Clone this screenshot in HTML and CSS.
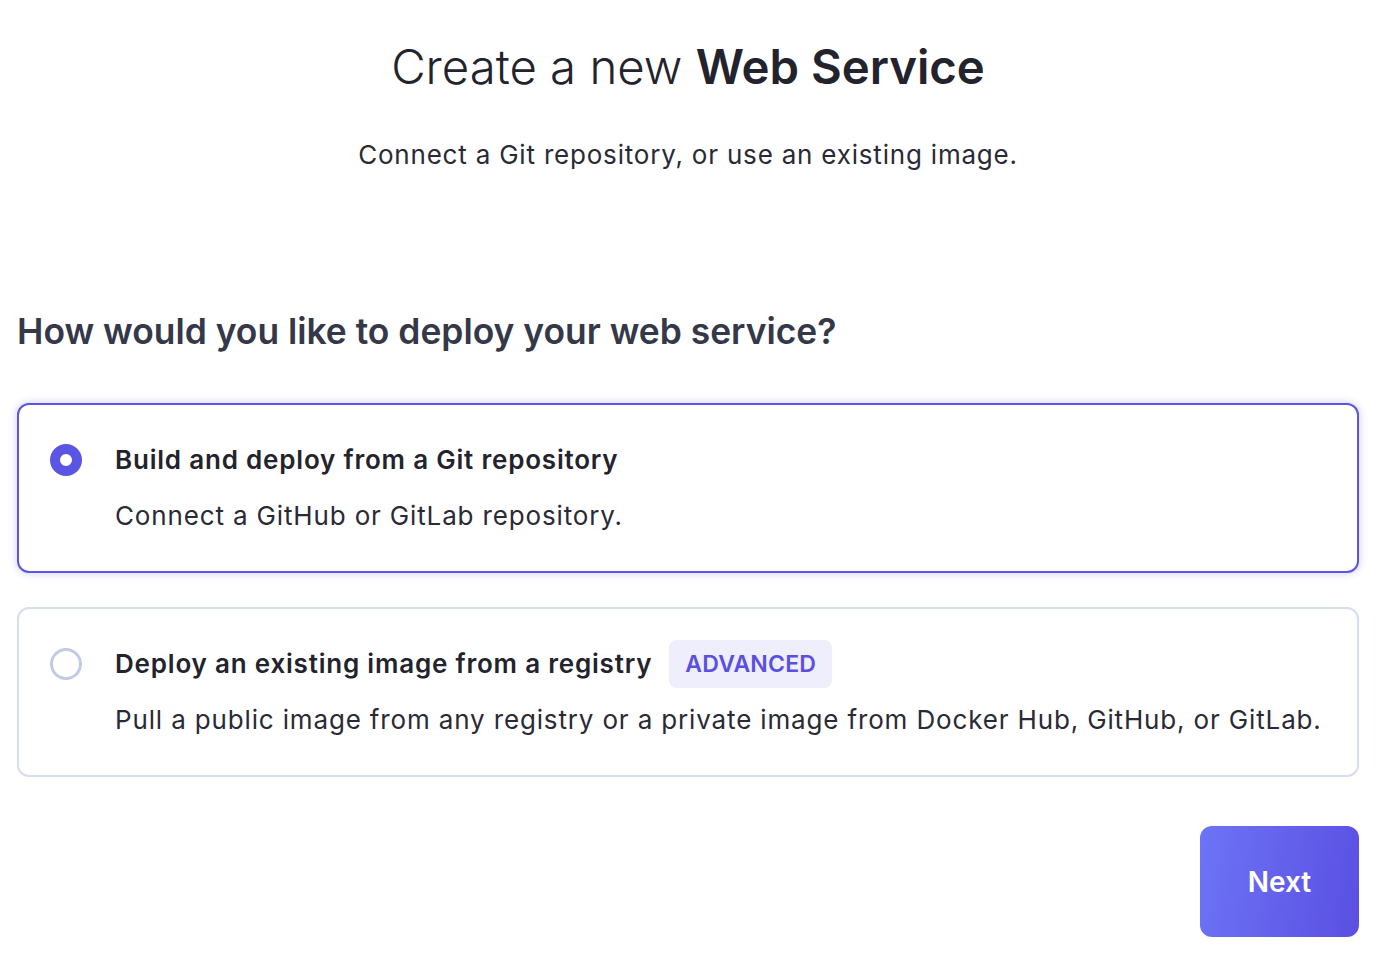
FILE: index.html
```html
<!DOCTYPE html>
<html lang="en">
<head>
<meta charset="utf-8">
<title>Create a new Web Service</title>
<link rel="stylesheet" href="styles.css">
</head>
<body>
<main class="page">
  <h1 class="title">Create a new <strong>Web Service</strong></h1>
  <p class="subtitle">Connect a Git repository, or use an existing image.</p>

  <h2 class="question">How would you like to deploy your web service?</h2>

  <div class="options">
    <label class="option option--selected">
      <span class="radio radio--on"></span>
      <span class="option-title">Build and deploy from a Git repository</span>
      <span class="option-desc">Connect a GitHub or GitLab repository.</span>
    </label>
    <label class="option">
      <span class="radio"></span>
      <span class="option-title">Deploy an existing image from a registry <span class="badge">ADVANCED</span></span>
      <span class="option-desc">Pull a public image from any registry or a private image from Docker Hub, GitHub, or GitLab.</span>
    </label>
  </div>

  <div class="actions">
    <button class="next">Next</button>
  </div>
</main>
</body>
</html>
```

FILE: styles.css
```css
* { box-sizing: border-box; }
html, body { margin: 0; padding: 0; background: #ffffff; }
body {
  font-family: Inter, "Noto Sans", "Liberation Sans", sans-serif;
  color: #23232d;
}
.page {
  width: 1342px;
  margin-left: 17px;
  padding-bottom: 40px;
}
.title {
  margin: 38px 0 0;
  text-align: center;
  font-size: 47.3px;
  line-height: 58px;
  font-weight: 300;
  color: #23232d;
}
.title strong { font-weight: 600; }
.subtitle {
  margin: 43px 0 0;
  text-align: center;
  font-size: 26px;
  line-height: 32px;
  font-weight: 400;
  letter-spacing: 0.8px;
  color: #2a2a36;
}
.question {
  margin: 139px 0 0;
  font-size: 35.4px;
  line-height: 44px;
  font-weight: 600;
  color: #343849;
}
.options {
  margin-top: 49px;
  display: flex;
  flex-direction: column;
  gap: 34px;
}
.option {
  display: grid;
  grid-template-columns: 32px 1fr;
  column-gap: 33px;
  row-gap: 24px;
  align-items: center;
  height: 170px;
  padding: 39px 31px;
  border: 2px solid #d9deee;
  border-radius: 12px;
  background: #fff;
  cursor: pointer;
}
.option--selected {
  border-color: #5b55e4;
  box-shadow: 0 0 6px 2px rgba(110, 110, 245, 0.22);
}
.radio {
  width: 32px;
  height: 32px;
  border-radius: 50%;
  border: 3px solid #c3cbe3;
  background: #fff;
}
.radio--on {
  border: 10px solid #5b55e4;
}
.option-title {
  display: flex;
  align-items: center;
  font-size: 26px;
  line-height: 32px;
  font-weight: 600;
  letter-spacing: 0.8px;
  color: #23232d;
}
.option-desc {
  grid-column: 2;
  font-size: 26px;
  line-height: 32px;
  font-weight: 400;
  letter-spacing: 0.85px;
  color: #2a2a36;
}
.badge {
  margin: -8px 0 -8px 17px;
  padding: 8px 16px;
  height: 48px;
  display: inline-flex;
  align-items: center;
  background: #eeeefc;
  border-radius: 8px;
  color: #5a4fe0;
  font-size: 23px;
  font-weight: 600;
  letter-spacing: 0.2px;
}
.actions {
  margin-top: 49px;
  display: flex;
  justify-content: flex-end;
}
.next {
  width: 159px;
  height: 111px;
  border: none;
  border-radius: 12px;
  background: linear-gradient(100deg, #6d74f6 0%, #5a4fe2 100%);
  color: #fff;
  font-family: inherit;
  font-size: 28px;
  font-weight: 600;
  cursor: pointer;
}
```
